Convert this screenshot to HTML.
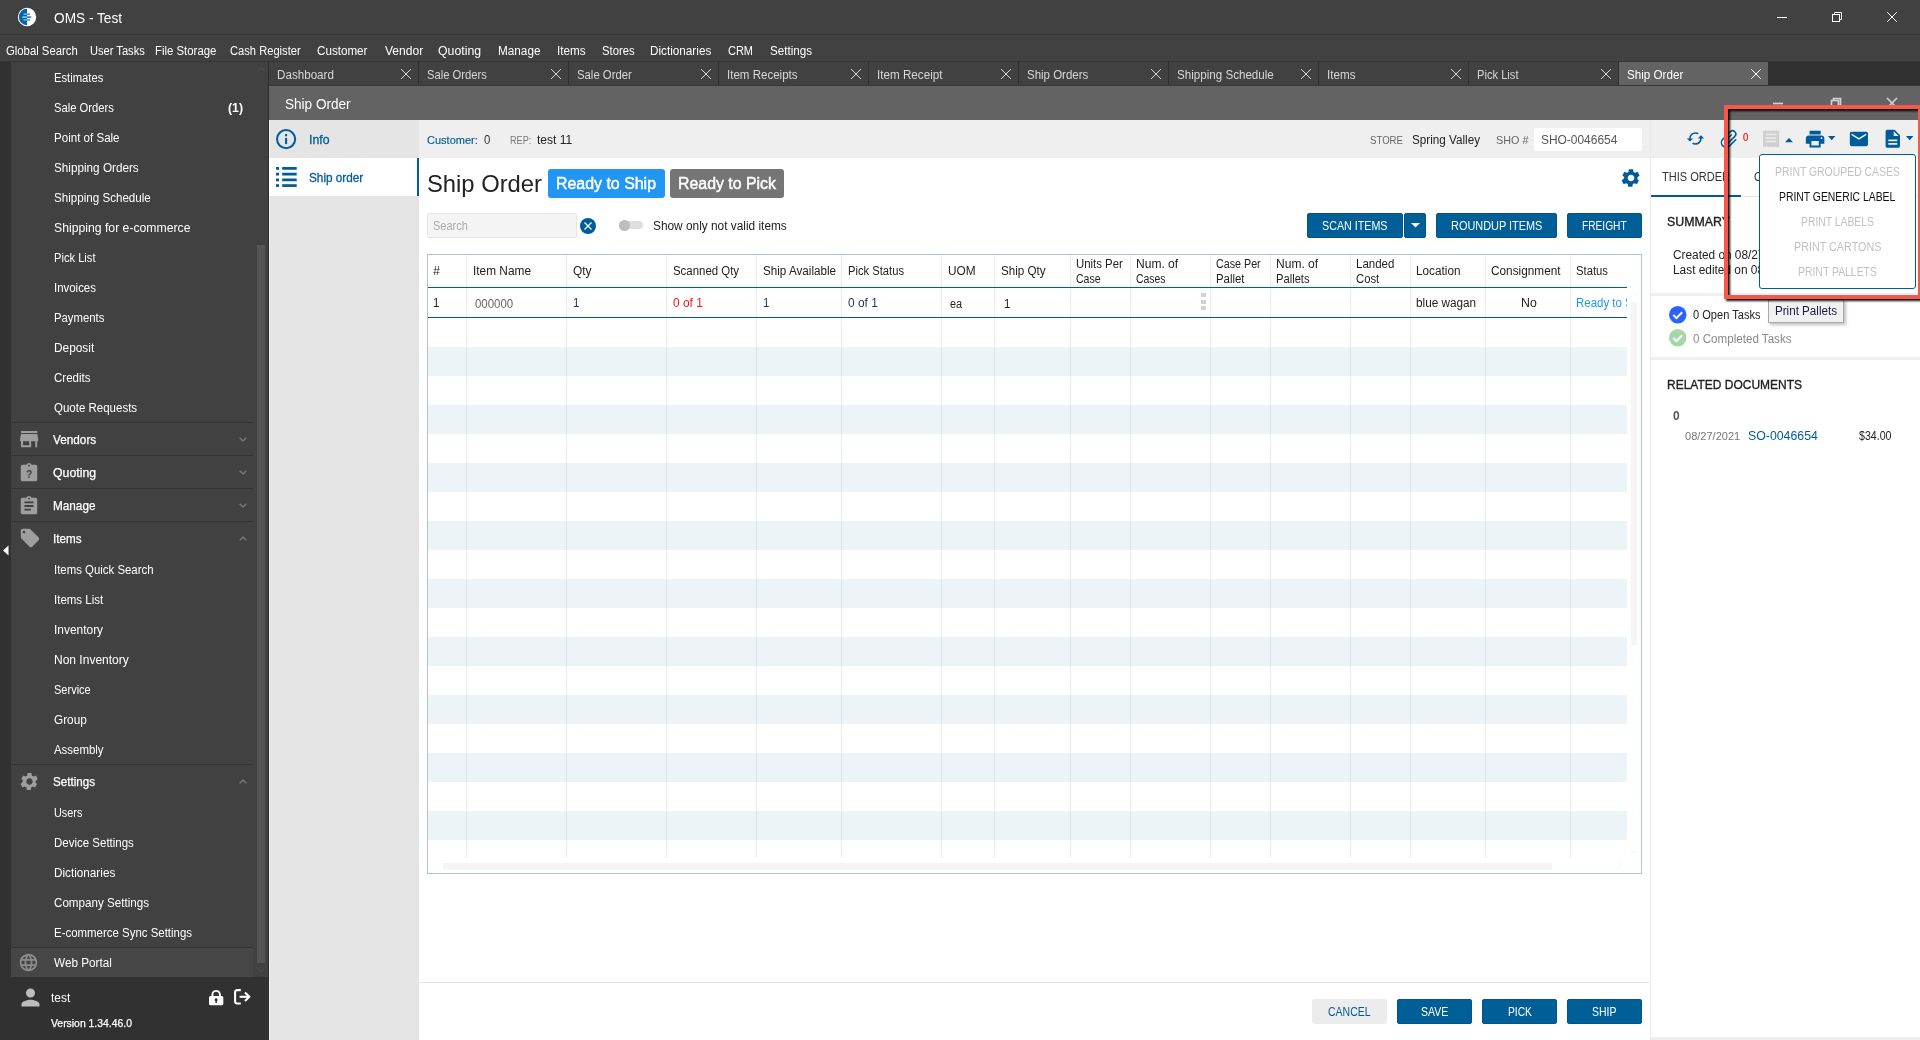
<!DOCTYPE html>
<html><head><meta charset="utf-8"><title>OMS - Test</title>
<style>
*{box-sizing:border-box;margin:0;padding:0}
html,body{width:1920px;height:1040px;overflow:hidden;background:#414141;font-family:"Liberation Sans",sans-serif;font-size:12px;color:#fff}
.a{position:absolute;white-space:nowrap}
.t{position:absolute;white-space:nowrap;transform-origin:0 0}
svg{position:absolute;overflow:visible}
</style></head><body>

<div class="a" style="left:0px;top:0px;width:1920px;height:34px;background:#414141;"></div>
<div class="a" style="left:0px;top:34px;width:1920px;height:1px;background:#363636;"></div>
<div class="a" style="left:0px;top:61px;width:1920px;height:1px;background:#363636;"></div>
<svg style="left:17px;top:7px" width="20" height="20" viewBox="0 0 20 20">
<circle cx="10" cy="10" r="9.200" fill="#fff"/>
<path d="M10 1.800 A8.200 8.200 0 0 0 10 18.200 Z" fill="#0067a8"/>
<g fill="#a8d0ea"><rect x="6.500" y="6.600" width="3.500" height="1.100"/><rect x="5.300" y="9.400" width="4.700" height="1.400"/><rect x="6.500" y="12.400" width="3.500" height="1.100"/></g><g fill="#0067a8"><rect x="10" y="6.600" width="3" height="1.100"/><rect x="10" y="9.400" width="4.200" height="1.400"/><rect x="10" y="12.400" width="3" height="1.100"/></g>
</svg>
<div class="t" style="left:54.00px;top:8.0px;font-size:14px;line-height:20px;color:#fff;transform:scaleX(0.9763);">OMS - Test</div>
<svg style="left:0;top:0" width="1920" height="130"><g stroke="#fff" stroke-width="1" fill="none"><path d="M1777 17.5h10"/><rect x="1832.5" y="14.5" width="7" height="7"/><path d="M1834.5 14.5v-2h7v7h-2"/><path d="M1887 12l10 10M1897 12l-10 10"/></g></svg>
<div class="t" style="left:6.00px;top:43.0px;font-size:12px;line-height:16px;color:#fff;transform:scaleX(0.9428);">Global Search</div>
<div class="t" style="left:90.00px;top:43.0px;font-size:12px;line-height:16px;color:#fff;transform:scaleX(0.9261);">User Tasks</div>
<div class="t" style="left:155.00px;top:43.0px;font-size:12px;line-height:16px;color:#fff;transform:scaleX(0.9486);">File Storage</div>
<div class="t" style="left:230.00px;top:43.0px;font-size:12px;line-height:16px;color:#fff;transform:scaleX(0.9294);">Cash Register</div>
<div class="t" style="left:317.00px;top:43.0px;font-size:12px;line-height:16px;color:#fff;transform:scaleX(0.9700);">Customer</div>
<div class="t" style="left:385.00px;top:43.0px;font-size:12px;line-height:16px;color:#fff;transform:scaleX(1.0042);">Vendor</div>
<div class="t" style="left:438.00px;top:43.0px;font-size:12px;line-height:16px;color:#fff;transform:scaleX(1.0242);">Quoting</div>
<div class="t" style="left:498.00px;top:43.0px;font-size:12px;line-height:16px;color:#fff;transform:scaleX(0.9789);">Manage</div>
<div class="t" style="left:557.00px;top:43.0px;font-size:12px;line-height:16px;color:#fff;transform:scaleX(0.9730);">Items</div>
<div class="t" style="left:602.00px;top:43.0px;font-size:12px;line-height:16px;color:#fff;transform:scaleX(0.9374);">Stores</div>
<div class="t" style="left:650.00px;top:43.0px;font-size:12px;line-height:16px;color:#fff;transform:scaleX(0.9774);">Dictionaries</div>
<div class="t" style="left:728.00px;top:43.0px;font-size:12px;line-height:16px;color:#fff;transform:scaleX(0.9147);">CRM</div>
<div class="t" style="left:770.00px;top:43.0px;font-size:12px;line-height:16px;color:#fff;transform:scaleX(0.9685);">Settings</div>
<div class="a" style="left:0px;top:62px;width:11px;height:978px;background:#313131;"></div>
<div class="a" style="left:11px;top:62px;width:258px;height:916px;background:#414141;"></div>
<div class="a" style="left:0px;top:977px;width:269px;height:63px;background:#313131;"></div>
<div class="a" style="left:11px;top:948px;width:242px;height:29px;background:#464646;"></div>
<div class="a" style="left:268px;top:62px;width:1px;height:915px;background:#2c2c2c;"></div>
<div class="a" style="left:257px;top:245px;width:8px;height:718px;background:#555;"></div>
<svg style="left:0;top:0" width="270" height="1040"><g stroke="#505050" stroke-width="1" fill="none"><path d="M257 71.500l4-4l4 4"/><path d="M257 967.500l4 4l4-4"/></g><path d="M8.500 545.500l-5.500 5l5.500 5z" fill="#fff"/></svg>
<div class="t" style="left:54.00px;top:70.0px;font-size:12px;line-height:16px;color:#fff;transform:scaleX(0.9354);">Estimates</div>
<div class="t" style="left:54.00px;top:100.0px;font-size:12px;line-height:16px;color:#fff;transform:scaleX(0.9346);">Sale Orders</div>
<div class="t" style="left:54.00px;top:130.0px;font-size:12px;line-height:16px;color:#fff;transform:scaleX(0.9634);">Point of Sale</div>
<div class="t" style="left:54.00px;top:160.0px;font-size:12px;line-height:16px;color:#fff;transform:scaleX(0.9772);">Shipping Orders</div>
<div class="t" style="left:54.00px;top:190.0px;font-size:12px;line-height:16px;color:#fff;transform:scaleX(0.9671);">Shipping Schedule</div>
<div class="t" style="left:54.00px;top:220.0px;font-size:12px;line-height:16px;color:#fff;transform:scaleX(1.0182);">Shipping for e-commerce</div>
<div class="t" style="left:54.00px;top:250.0px;font-size:12px;line-height:16px;color:#fff;transform:scaleX(0.9287);">Pick List</div>
<div class="t" style="left:54.00px;top:280.0px;font-size:12px;line-height:16px;color:#fff;transform:scaleX(0.9529);">Invoices</div>
<div class="t" style="left:54.00px;top:310.0px;font-size:12px;line-height:16px;color:#fff;transform:scaleX(0.9445);">Payments</div>
<div class="t" style="left:54.00px;top:340.0px;font-size:12px;line-height:16px;color:#fff;transform:scaleX(0.9890);">Deposit</div>
<div class="t" style="left:54.00px;top:370.0px;font-size:12px;line-height:16px;color:#fff;transform:scaleX(0.9586);">Credits</div>
<div class="t" style="left:54.00px;top:400.0px;font-size:12px;line-height:16px;color:#fff;transform:scaleX(0.9582);">Quote Requests</div>
<div class="t" style="left:54.00px;top:562.0px;font-size:12px;line-height:16px;color:#fff;transform:scaleX(0.9509);">Items Quick Search</div>
<div class="t" style="left:54.00px;top:592.0px;font-size:12px;line-height:16px;color:#fff;transform:scaleX(0.9587);">Items List</div>
<div class="t" style="left:54.00px;top:622.0px;font-size:12px;line-height:16px;color:#fff;transform:scaleX(0.9945);">Inventory</div>
<div class="t" style="left:54.00px;top:652.0px;font-size:12px;line-height:16px;color:#fff;transform:scaleX(1.0010);">Non Inventory</div>
<div class="t" style="left:54.00px;top:682.0px;font-size:12px;line-height:16px;color:#fff;transform:scaleX(0.9180);">Service</div>
<div class="t" style="left:54.00px;top:712.0px;font-size:12px;line-height:16px;color:#fff;transform:scaleX(0.9829);">Group</div>
<div class="t" style="left:54.00px;top:742.0px;font-size:12px;line-height:16px;color:#fff;transform:scaleX(0.9519);">Assembly</div>
<div class="t" style="left:54.00px;top:805.0px;font-size:12px;line-height:16px;color:#fff;transform:scaleX(0.9072);">Users</div>
<div class="t" style="left:54.00px;top:835.0px;font-size:12px;line-height:16px;color:#fff;transform:scaleX(0.9580);">Device Settings</div>
<div class="t" style="left:54.00px;top:865.0px;font-size:12px;line-height:16px;color:#fff;transform:scaleX(0.9774);">Dictionaries</div>
<div class="t" style="left:54.00px;top:895.0px;font-size:12px;line-height:16px;color:#fff;transform:scaleX(0.9688);">Company Settings</div>
<div class="t" style="left:54.00px;top:925.0px;font-size:12px;line-height:16px;color:#fff;transform:scaleX(0.9535);">E-commerce Sync Settings</div>
<div class="t" style="left:227.50px;top:100.0px;font-size:12px;line-height:16px;color:#fff;font-weight:bold;transform:scaleX(1.0224);">(1)</div>
<div class="a" style="left:12px;top:422px;width:241px;height:1px;background:#343434;border-radius:1px"></div>
<div class="a" style="left:12px;top:455px;width:241px;height:1px;background:#343434;border-radius:1px"></div>
<div class="a" style="left:12px;top:488px;width:241px;height:1px;background:#343434;border-radius:1px"></div>
<div class="a" style="left:12px;top:521px;width:241px;height:1px;background:#343434;border-radius:1px"></div>
<div class="a" style="left:12px;top:764px;width:241px;height:1px;background:#343434;border-radius:1px"></div>
<div class="a" style="left:12px;top:947px;width:241px;height:1px;background:#343434;border-radius:1px"></div>
<div class="t" style="left:53.00px;top:432.0px;font-size:12px;line-height:16px;color:#fff;transform:scaleX(0.9813);-webkit-text-stroke:0.25px #fff;">Vendors</div>
<svg style="left:239px;top:436.5px" width="8" height="5"><path d="M0.700 0.700l3.300 3.300l3.300-3.300" stroke="#787878" stroke-width="1.400" fill="none"/></svg>
<div class="t" style="left:53.00px;top:465.0px;font-size:12px;line-height:16px;color:#fff;transform:scaleX(1.0242);-webkit-text-stroke:0.25px #fff;">Quoting</div>
<svg style="left:239px;top:469.5px" width="8" height="5"><path d="M0.700 0.700l3.300 3.300l3.300-3.300" stroke="#787878" stroke-width="1.400" fill="none"/></svg>
<div class="t" style="left:53.00px;top:498.0px;font-size:12px;line-height:16px;color:#fff;transform:scaleX(0.9789);-webkit-text-stroke:0.25px #fff;">Manage</div>
<svg style="left:239px;top:502.5px" width="8" height="5"><path d="M0.700 0.700l3.300 3.300l3.300-3.300" stroke="#787878" stroke-width="1.400" fill="none"/></svg>
<div class="t" style="left:53.00px;top:531.0px;font-size:12px;line-height:16px;color:#fff;transform:scaleX(0.9730);-webkit-text-stroke:0.25px #fff;">Items</div>
<svg style="left:239px;top:535.5px" width="8" height="5"><path d="M0.700 4.300l3.300-3.300l3.300 3.300" stroke="#787878" stroke-width="1.400" fill="none"/></svg>
<div class="t" style="left:53.00px;top:774.0px;font-size:12px;line-height:16px;color:#fff;transform:scaleX(0.9685);-webkit-text-stroke:0.25px #fff;">Settings</div>
<svg style="left:239px;top:778.5px" width="8" height="5"><path d="M0.700 4.300l3.300-3.300l3.300 3.300" stroke="#787878" stroke-width="1.400" fill="none"/></svg>
<div class="t" style="left:54.00px;top:955.0px;font-size:12px;line-height:16px;color:#fff;transform:scaleX(0.9799);">Web Portal</div>
<svg style="left:17.300px;top:426.900px" width="24.300" height="24.300" viewBox="0 0 24 24"><path fill="#9e9e9e" d="M12,18H6V14H12M21,14V12L20,7H4L3,12V14H4V20H14V14H18V20H20V14M20,4H4V6H20V4Z"/></svg>
<svg style="left:18.300px;top:462px" width="22" height="22" viewBox="0 0 24 24"><path fill="#9e9e9e" d="M19 3h-4.180C14.400 1.840 13.300 1 12 1s-2.400.84-2.820 2H5c-1.100 0-2 .9-2 2v14c0 1.100.9 2 2 2h14c1.100 0 2-.9 2-2V5c0-1.100-.9-2-2-2zm-7 0c.55 0 1 .45 1 1s-.45 1-1 1-1-.45-1-1 .45-1 1-1z"/><text x="12" y="17.500" font-size="11" font-weight="bold" text-anchor="middle" fill="#414141" font-family="Liberation Sans, sans-serif">?</text></svg>
<svg style="left:18.300px;top:495px" width="22" height="22" viewBox="0 0 24 24"><path fill="#9e9e9e" d="M19 3h-4.180C14.400 1.840 13.300 1 12 1s-2.400.84-2.820 2H5c-1.100 0-2 .9-2 2v14c0 1.100.9 2 2 2h14c1.100 0 2-.9 2-2V5c0-1.100-.9-2-2-2zm-7 0c.55 0 1 .45 1 1s-.45 1-1 1-1-.45-1-1 .45-1 1-1zm2 14H7v-2h7v2zm3-4H7v-2h10v2zm0-4H7V7h10v2z"/></svg>
<svg style="left:18.600px;top:526.800px" width="22" height="22" viewBox="0 0 24 24"><path fill="#9e9e9e" d="M21.410 11.580l-9-9C12.050 2.220 11.550 2 11 2H4c-1.100 0-2 .9-2 2v7c0 .55.22 1.050.59 1.420l9 9c.36.36.86.58 1.410.58s1.050-.22 1.410-.59l7-7c.37-.36.59-.86.59-1.410s-.23-1.060-.59-1.420zM5.500 7C4.670 7 4 6.330 4 5.500S4.670 4 5.500 4 7 4.670 7 5.500 6.330 7 5.500 7z"/></svg>
<svg style="left:18.500px;top:770.500px" width="21" height="21" viewBox="0 0 24 24"><path fill="#9e9e9e" d="M19.140 12.940c.04-.3.06-.61.06-.94 0-.32-.02-.64-.07-.94l2.030-1.580c.18-.14.23-.41.12-.61l-1.920-3.320c-.12-.22-.37-.29-.59-.22l-2.390.96c-.5-.38-1.030-.7-1.620-.94l-.36-2.540c-.04-.24-.24-.41-.48-.41h-3.840c-.24 0-.43.17-.47.41l-.36 2.540c-.59.24-1.130.57-1.620.94l-2.390-.96c-.22-.08-.47 0-.59.22L2.740 8.870c-.12.21-.08.47.12.61l2.030 1.580c-.05.3-.9.63-.9.94s.2.640.07.940l-2.030 1.580c-.18.14-.23.41-.12.61l1.920 3.320c.12.22.37.29.59.22l2.390-.96c.5.38 1.030.7 1.620.94l.36 2.540c.05.24.24.41.48.41h3.840c.24 0 .44-.17.47-.41l.36-2.540c.59-.24 1.130-.56 1.620-.94l2.390.96c.22.08.47 0 .59-.22l1.920-3.320c.12-.22.07-.47-.12-.61l-2.010-1.580zM12 15.600c-1.980 0-3.600-1.620-3.600-3.600s1.620-3.600 3.600-3.600 3.600 1.620 3.600 3.600-1.620 3.600-3.600 3.600z"/></svg>
<svg style="left:18px;top:952px" width="21" height="21" viewBox="0 0 24 24"><path fill="#8c8c8c" d="M11.990 2C6.470 2 2 6.480 2 12s4.470 10 9.990 10C17.520 22 22 17.520 22 12S17.520 2 11.990 2zm6.930 6h-2.950c-.32-1.250-.78-2.450-1.380-3.560 1.840.63 3.370 1.910 4.330 3.560zM12 4.040c.83 1.200 1.480 2.530 1.910 3.960h-3.820c.43-1.430 1.080-2.760 1.910-3.960zM4.260 14C4.100 13.360 4 12.690 4 12s.1-1.360.26-2h3.380c-.08.66-.14 1.320-.14 2 0 .68.060 1.340.14 2H4.260zm.82 2h2.950c.32 1.250.78 2.450 1.380 3.560-1.840-.63-3.370-1.900-4.330-3.560zm2.950-8H5.080c.96-1.660 2.490-2.930 4.330-3.560C8.810 5.550 8.350 6.750 8.030 8zM12 19.960c-.83-1.200-1.480-2.530-1.910-3.960h3.820c-.43 1.430-1.080 2.760-1.910 3.960zM14.340 14H9.660c-.09-.66-.16-1.320-.16-2 0-.68.070-1.350.16-2h4.680c.09.650.16 1.320.16 2 0 .68-.07 1.340-.16 2zm.25 5.560c.6-1.110 1.060-2.310 1.380-3.560h2.950c-.96 1.650-2.490 2.930-4.330 3.560zM16.360 14c.08-.66.140-1.320.140-2 0-.68-.06-1.340-.14-2h3.380c.16.640.26 1.310.26 2s-.1 1.360-.26 2h-3.380z"/></svg>
<svg style="left:16.600px;top:983.900px" width="27" height="27" viewBox="0 0 24 24"><path fill="#bdbdbd" d="M12 12c2.210 0 4-1.790 4-4s-1.790-4-4-4-4 1.790-4 4 1.790 4 4 4zm0 2c-2.670 0-8 1.340-8 4v2h16v-2c0-2.660-5.330-4-8-4z"/></svg>
<div class="t" style="left:51.00px;top:990.0px;font-size:12px;line-height:16px;color:#fff;transform:scaleX(0.9933);">test</div>
<div class="t" style="left:51.00px;top:1015.0px;font-size:11px;line-height:16px;color:#fff;transform:scaleX(0.9452);-webkit-text-stroke:0.25px #fff;">Version 1.34.46.0</div>
<svg style="left:208.800px;top:989.600px" width="14.300" height="15.300" viewBox="0 0 14.300 15.300"><path d="M3.400 6.500V4.600a3.750 3.750 0 0 1 7.500 0V6.500" stroke="#fff" stroke-width="1.900" fill="none"/><path fill="#fff" fill-rule="evenodd" d="M1.600 6h11.100a1.600 1.600 0 0 1 1.600 1.600v6.100a1.600 1.600 0 0 1-1.600 1.600H1.600A1.600 1.600 0 0 1 0 13.700V7.600A1.600 1.600 0 0 1 1.600 6zM7.150 8.300a1.500 1.500 0 0 0-.75 2.800v1.900h1.500v-1.900a1.500 1.500 0 0 0-.75-2.800z"/></svg>
<svg style="left:234px;top:989.300px" width="16.200" height="15.600" viewBox="0 0 16.200 15.600"><g stroke="#fff" stroke-width="2.100" fill="none"><path d="M6.800 1.100H3.100a2 2 0 0 0-2 2v9.400a2 2 0 0 0 2 2H6.800"/><path d="M5.600 7.800h9.200"/><path d="M11 3.500l4.300 4.300l-4.300 4.300"/></g></svg>
<div class="a" style="left:269px;top:62px;width:1651px;height:24px;background:#313131;"></div>
<div class="a" style="left:269px;top:85px;width:1651px;height:1px;background:#383838;"></div>
<div class="a" style="left:269px;top:62px;width:149px;height:23px;background:#414141;"></div>
<div class="t" style="left:277.00px;top:67.0px;font-size:12px;line-height:16px;color:#d8d8d8;transform:scaleX(0.9700);">Dashboard</div>
<svg style="left:401px;top:69px" width="10" height="10"><path d="M0 0l10 10M10 0l-10 10" stroke="#d8d8d8" stroke-width="1" fill="none"/></svg>
<div class="a" style="left:419px;top:62px;width:149px;height:23px;background:#414141;"></div>
<div class="t" style="left:427.00px;top:67.0px;font-size:12px;line-height:16px;color:#d8d8d8;transform:scaleX(0.9346);">Sale Orders</div>
<svg style="left:551px;top:69px" width="10" height="10"><path d="M0 0l10 10M10 0l-10 10" stroke="#d8d8d8" stroke-width="1" fill="none"/></svg>
<div class="a" style="left:569px;top:62px;width:149px;height:23px;background:#414141;"></div>
<div class="t" style="left:577.00px;top:67.0px;font-size:12px;line-height:16px;color:#d8d8d8;transform:scaleX(0.9448);">Sale Order</div>
<svg style="left:701px;top:69px" width="10" height="10"><path d="M0 0l10 10M10 0l-10 10" stroke="#d8d8d8" stroke-width="1" fill="none"/></svg>
<div class="a" style="left:719px;top:62px;width:149px;height:23px;background:#414141;"></div>
<div class="t" style="left:727.00px;top:67.0px;font-size:12px;line-height:16px;color:#d8d8d8;transform:scaleX(0.9612);">Item Receipts</div>
<svg style="left:851px;top:69px" width="10" height="10"><path d="M0 0l10 10M10 0l-10 10" stroke="#d8d8d8" stroke-width="1" fill="none"/></svg>
<div class="a" style="left:869px;top:62px;width:149px;height:23px;background:#414141;"></div>
<div class="t" style="left:877.00px;top:67.0px;font-size:12px;line-height:16px;color:#d8d8d8;transform:scaleX(0.9724);">Item Receipt</div>
<svg style="left:1001px;top:69px" width="10" height="10"><path d="M0 0l10 10M10 0l-10 10" stroke="#d8d8d8" stroke-width="1" fill="none"/></svg>
<div class="a" style="left:1019px;top:62px;width:149px;height:23px;background:#414141;"></div>
<div class="t" style="left:1027.00px;top:67.0px;font-size:12px;line-height:16px;color:#d8d8d8;transform:scaleX(0.9571);">Ship Orders</div>
<svg style="left:1151px;top:69px" width="10" height="10"><path d="M0 0l10 10M10 0l-10 10" stroke="#d8d8d8" stroke-width="1" fill="none"/></svg>
<div class="a" style="left:1169px;top:62px;width:149px;height:23px;background:#414141;"></div>
<div class="t" style="left:1177.00px;top:67.0px;font-size:12px;line-height:16px;color:#d8d8d8;transform:scaleX(0.9671);">Shipping Schedule</div>
<svg style="left:1301px;top:69px" width="10" height="10"><path d="M0 0l10 10M10 0l-10 10" stroke="#d8d8d8" stroke-width="1" fill="none"/></svg>
<div class="a" style="left:1319px;top:62px;width:149px;height:23px;background:#414141;"></div>
<div class="t" style="left:1327.00px;top:67.0px;font-size:12px;line-height:16px;color:#d8d8d8;transform:scaleX(0.9730);">Items</div>
<svg style="left:1451px;top:69px" width="10" height="10"><path d="M0 0l10 10M10 0l-10 10" stroke="#d8d8d8" stroke-width="1" fill="none"/></svg>
<div class="a" style="left:1469px;top:62px;width:149px;height:23px;background:#414141;"></div>
<div class="t" style="left:1477.00px;top:67.0px;font-size:12px;line-height:16px;color:#d8d8d8;transform:scaleX(0.9287);">Pick List</div>
<svg style="left:1601px;top:69px" width="10" height="10"><path d="M0 0l10 10M10 0l-10 10" stroke="#d8d8d8" stroke-width="1" fill="none"/></svg>
<div class="a" style="left:1619px;top:62px;width:149px;height:23px;background:#636363;"></div>
<div class="t" style="left:1627.00px;top:67.0px;font-size:12px;line-height:16px;color:#fff;transform:scaleX(0.9697);">Ship Order</div>
<svg style="left:1751px;top:69px" width="10" height="10"><path d="M0 0l10 10M10 0l-10 10" stroke="#fff" stroke-width="1" fill="none"/></svg>
<div class="a" style="left:269px;top:86px;width:1651px;height:34px;background:#636363;"></div>
<div class="t" style="left:285.00px;top:94.5px;font-size:14px;line-height:18px;color:#fff;transform:scaleX(0.9697);">Ship Order</div>
<svg style="left:0;top:0" width="1920" height="130"><g stroke="#d2d2d2" stroke-width="1.7" fill="none"><path d="M1773 103.5h10"/><rect x="1831.5" y="100.5" width="7" height="7"/><path d="M1833.5 100.5v-2h7v7h-2"/><path d="M1887 98l10 10M1897 98l-10 10"/></g></svg>
<div class="a" style="left:269px;top:120px;width:150px;height:920px;background:#e5e5e5;"></div>
<div class="a" style="left:269px;top:120px;width:1px;height:920px;background:#f0f0f0;"></div>
<div class="a" style="left:269px;top:158px;width:150px;height:38px;background:#fff;border-right:2px solid #005a9e"></div>
<svg style="left:276px;top:129.300px" width="20.200" height="20.200" viewBox="0 0 20 20"><circle cx="10" cy="10" r="9" fill="none" stroke="#005b9a" stroke-width="2"/><rect x="9" y="8.800" width="2" height="6.200" fill="#005b9a"/><rect x="9" y="5" width="2" height="2.200" fill="#005b9a"/></svg>
<div class="t" style="left:309.00px;top:131.5px;font-size:12px;line-height:16px;color:#005b9a;transform:scaleX(1.0228);-webkit-text-stroke:0.3px #005b9a;">Info</div>
<svg style="left:276px;top:167.100px" width="21" height="20" viewBox="0 0 21 20"><g fill="#005b9a"><rect x="0" y="0" width="3" height="2.750"/><rect x="6.200" y="0" width="14.500" height="2.750"/><rect x="0" y="5.75" width="3" height="2.750"/><rect x="6.200" y="5.75" width="14.500" height="2.750"/><rect x="0" y="11.5" width="3" height="2.750"/><rect x="6.200" y="11.5" width="14.500" height="2.750"/><rect x="0" y="17.2" width="3" height="2.750"/><rect x="6.200" y="17.2" width="14.500" height="2.750"/></g></svg>
<div class="t" style="left:309.00px;top:169.5px;font-size:12px;line-height:16px;color:#005b9a;transform:scaleX(0.9804);-webkit-text-stroke:0.3px #005b9a;">Ship order</div>
<div class="a" style="left:419px;top:120px;width:1501px;height:38px;background:#efefef;"></div>
<div class="a" style="left:419px;top:158px;width:1501px;height:882px;background:#fff;"></div>
<div class="a" style="left:1650px;top:120px;width:1px;height:920px;background:#eaeaea;"></div>
<div class="a" style="left:419px;top:982px;width:1231px;height:1px;background:#e4e4e4;"></div>
<div class="a" style="left:1651px;top:1037px;width:269px;height:3px;background:#efefef;"></div>
<div class="t" style="left:427.00px;top:131.5px;font-size:11.5px;line-height:16px;color:#005b9a;transform:scaleX(0.9578);-webkit-text-stroke:0.15px #005b9a;">Customer:</div>
<div class="t" style="left:484.00px;top:131.5px;font-size:12px;line-height:16px;color:#333;transform:scaleX(0.9528);">0</div>
<div class="t" style="left:510.00px;top:131.5px;font-size:11.5px;line-height:16px;color:#777;transform:scaleX(0.7939);">REP:</div>
<div class="t" style="left:537.00px;top:131.5px;font-size:12px;line-height:16px;color:#222;transform:scaleX(1.0015);">test 11</div>
<div class="t" style="left:1370.00px;top:131.5px;font-size:11.5px;line-height:16px;color:#666;transform:scaleX(0.8370);">STORE</div>
<div class="t" style="left:1412.00px;top:131.5px;font-size:12px;line-height:16px;color:#222;transform:scaleX(0.9738);">Spring Valley</div>
<div class="t" style="left:1496.00px;top:131.5px;font-size:11.5px;line-height:16px;color:#666;transform:scaleX(0.9384);">SHO #</div>
<div class="a" style="left:1534px;top:128px;width:108px;height:23px;background:#fff;border-radius:2px"></div>
<div class="t" style="left:1541.00px;top:131.5px;font-size:12px;line-height:16px;color:#555;transform:scaleX(0.9945);">SHO-0046654</div>
<div class="t" style="left:427.00px;top:168.5px;font-size:24px;line-height:30px;color:#222;transform:scaleX(0.9908);">Ship Order</div>
<div class="a" style="left:548px;top:169px;width:117px;height:29px;background:#2196f3;border-radius:3px"></div>
<div class="t" style="left:556.00px;top:173.5px;font-size:16px;line-height:20px;color:#fff;transform:scaleX(0.9949);-webkit-text-stroke:0.45px #fff;">Ready to Ship</div>
<div class="a" style="left:670px;top:169px;width:114px;height:29px;background:#757575;border-radius:3px"></div>
<div class="t" style="left:678.00px;top:173.5px;font-size:16px;line-height:20px;color:#fff;transform:scaleX(0.9927);-webkit-text-stroke:0.45px #fff;">Ready to Pick</div>
<svg style="left:1619.500px;top:167px" width="22" height="22" viewBox="0 0 24 24"><path fill="#005b9a" d="M19.140 12.940c.04-.3.06-.61.06-.94 0-.32-.02-.64-.07-.94l2.030-1.580c.18-.14.23-.41.12-.61l-1.920-3.320c-.12-.22-.37-.29-.59-.22l-2.390.96c-.5-.38-1.030-.7-1.620-.94l-.36-2.540c-.04-.24-.24-.41-.48-.41h-3.840c-.24 0-.43.17-.47.41l-.36 2.540c-.59.24-1.130.57-1.620.94l-2.390-.96c-.22-.08-.47 0-.59.22L2.740 8.870c-.12.21-.08.47.12.61l2.030 1.580c-.05.3-.9.63-.9.94s.2.640.07.940l-2.030 1.580c-.18.14-.23.41-.12.61l1.920 3.320c.12.22.37.29.59.22l2.390-.96c.5.38 1.030.7 1.620.94l.36 2.540c.05.24.24.41.48.41h3.840c.24 0 .44-.17.47-.41l.36-2.540c.59-.24 1.130-.56 1.620-.94l2.390.96c.22.08.47 0 .59-.22l1.920-3.320c.12-.22.07-.47-.12-.61l-2.010-1.580zM12 15.600c-1.980 0-3.600-1.620-3.600-3.600s1.620-3.600 3.600-3.600 3.600 1.620 3.600 3.600-1.620 3.600-3.600 3.600z"/></svg>
<div class="a" style="left:427px;top:213px;width:150px;height:25px;background:#f4f4f4;border:1px solid #e6e6e6;border-radius:2px"></div>
<div class="t" style="left:433.00px;top:217.5px;font-size:12px;line-height:16px;color:#aaa;transform:scaleX(0.9133);">Search</div>
<svg style="left:580px;top:217.600px" width="16" height="16" viewBox="0 0 16 16"><circle cx="8" cy="8" r="8" fill="#005b9a"/><path d="M4.500 4.500l7 7M11.500 4.500l-7 7" stroke="#fff" stroke-width="1.300"/></svg>
<div class="a" style="left:619px;top:221px;width:24px;height:8px;background:#dedede;border-radius:4px"></div>
<div class="a" style="left:619px;top:219.5px;width:11px;height:11px;background:#bdbdbd;border-radius:6px"></div>
<div class="t" style="left:653.00px;top:217.5px;font-size:12px;line-height:16px;color:#222;transform:scaleX(0.9881);">Show only not valid items</div>
<div class="a" style="left:1307px;top:213px;width:96px;height:25px;background:#005f97;border-radius:2px;border:1px solid #00558d;"></div>
<div class="t" style="left:1322.26px;top:217.5px;font-size:12px;line-height:16px;color:#fff;transform:scaleX(0.8929);">SCAN ITEMS</div>
<div class="a" style="left:1404px;top:213px;width:22px;height:25px;background:#005f97;border-radius:2px;border:1px solid #00558d;"></div>
<svg style="left:1410.500px;top:223px" width="9" height="5"><path d="M0 0h9l-4.500 4.500z" fill="#fff"/></svg>
<div class="a" style="left:1436px;top:213px;width:121px;height:25px;background:#005f97;border-radius:2px;border:1px solid #00558d;"></div>
<div class="t" style="left:1450.80px;top:217.5px;font-size:12px;line-height:16px;color:#fff;transform:scaleX(0.9098);">ROUNDUP ITEMS</div>
<div class="a" style="left:1567px;top:213px;width:75px;height:25px;background:#005f97;border-radius:2px;border:1px solid #00558d;"></div>
<div class="t" style="left:1582.17px;top:217.5px;font-size:12px;line-height:16px;color:#fff;transform:scaleX(0.8479);">FREIGHT</div>
<div class="a" style="left:1312px;top:999px;width:75px;height:25px;background:#ececec;border-radius:2px;"></div>
<div class="t" style="left:1328.18px;top:1003.5px;font-size:12px;line-height:16px;color:#005b9a;transform:scaleX(0.8759);">CANCEL</div>
<div class="a" style="left:1397px;top:999px;width:75px;height:25px;background:#005f97;border-radius:2px;border:1px solid #00558d;"></div>
<div class="t" style="left:1420.89px;top:1003.5px;font-size:12px;line-height:16px;color:#fff;transform:scaleX(0.8745);">SAVE</div>
<div class="a" style="left:1482px;top:999px;width:75px;height:25px;background:#005f97;border-radius:2px;border:1px solid #00558d;"></div>
<div class="t" style="left:1507.53px;top:1003.5px;font-size:12px;line-height:16px;color:#fff;transform:scaleX(0.8545);">PICK</div>
<div class="a" style="left:1567px;top:999px;width:75px;height:25px;background:#005f97;border-radius:2px;border:1px solid #00558d;"></div>
<div class="t" style="left:1592.28px;top:1003.5px;font-size:12px;line-height:16px;color:#fff;transform:scaleX(0.8720);">SHIP</div>
<div class="a" style="left:427px;top:254px;width:1215px;height:620px;background:#fff;border:1px solid #b0c2d9"></div>
<div class="a" style="left:428px;top:347px;width:1198.5px;height:29px;background:#ecf4f7;"></div>
<div class="a" style="left:428px;top:405px;width:1198.5px;height:29px;background:#ecf4f7;"></div>
<div class="a" style="left:428px;top:463px;width:1198.5px;height:29px;background:#ecf4f7;"></div>
<div class="a" style="left:428px;top:521px;width:1198.5px;height:29px;background:#ecf4f7;"></div>
<div class="a" style="left:428px;top:579px;width:1198.5px;height:29px;background:#ecf4f7;"></div>
<div class="a" style="left:428px;top:637px;width:1198.5px;height:29px;background:#ecf4f7;"></div>
<div class="a" style="left:428px;top:695px;width:1198.5px;height:29px;background:#ecf4f7;"></div>
<div class="a" style="left:428px;top:753px;width:1198.5px;height:29px;background:#ecf4f7;"></div>
<div class="a" style="left:428px;top:811px;width:1198.5px;height:29px;background:#ecf4f7;"></div>
<div class="a" style="left:466.2px;top:255px;width:1.1px;height:603px;background:rgba(80,100,130,.12);"></div>
<div class="a" style="left:566.2px;top:255px;width:1.1px;height:603px;background:rgba(80,100,130,.12);"></div>
<div class="a" style="left:666.2px;top:255px;width:1.1px;height:603px;background:rgba(80,100,130,.12);"></div>
<div class="a" style="left:756.2px;top:255px;width:1.1px;height:603px;background:rgba(80,100,130,.12);"></div>
<div class="a" style="left:841.2px;top:255px;width:1.1px;height:603px;background:rgba(80,100,130,.12);"></div>
<div class="a" style="left:941.2px;top:255px;width:1.1px;height:603px;background:rgba(80,100,130,.12);"></div>
<div class="a" style="left:994.2px;top:255px;width:1.1px;height:603px;background:rgba(80,100,130,.12);"></div>
<div class="a" style="left:1070.2px;top:255px;width:1.1px;height:603px;background:rgba(80,100,130,.12);"></div>
<div class="a" style="left:1130.2px;top:255px;width:1.1px;height:603px;background:rgba(80,100,130,.12);"></div>
<div class="a" style="left:1210.2px;top:255px;width:1.1px;height:603px;background:rgba(80,100,130,.12);"></div>
<div class="a" style="left:1270.2px;top:255px;width:1.1px;height:603px;background:rgba(80,100,130,.12);"></div>
<div class="a" style="left:1350.2px;top:255px;width:1.1px;height:603px;background:rgba(80,100,130,.12);"></div>
<div class="a" style="left:1410.2px;top:255px;width:1.1px;height:603px;background:rgba(80,100,130,.12);"></div>
<div class="a" style="left:1485.2px;top:255px;width:1.1px;height:603px;background:rgba(80,100,130,.12);"></div>
<div class="a" style="left:1570.2px;top:255px;width:1.1px;height:603px;background:rgba(80,100,130,.12);"></div>
<div class="a" style="left:428px;top:285px;width:1199px;height:1px;background:rgba(0,0,0,.05);"></div>
<div class="a" style="left:428px;top:287px;width:1199px;height:1px;background:#005b9a;box-shadow:0 0 0.500px #005b9a"></div>
<div class="a" style="left:428px;top:317px;width:1199px;height:1px;background:#005b9a;box-shadow:0 0 0.500px #005b9a"></div>
<div class="t" style="left:433.00px;top:263.0px;font-size:12px;line-height:16px;color:#222;transform:scaleX(1.0443);">#</div>
<div class="t" style="left:473.00px;top:263.0px;font-size:12px;line-height:16px;color:#222;transform:scaleX(0.9885);">Item Name</div>
<div class="t" style="left:573.00px;top:263.0px;font-size:12px;line-height:16px;color:#222;transform:scaleX(0.9950);">Qty</div>
<div class="t" style="left:673.00px;top:263.0px;font-size:12px;line-height:16px;color:#222;transform:scaleX(0.9526);">Scanned Qty</div>
<div class="t" style="left:763.00px;top:263.0px;font-size:12px;line-height:16px;color:#222;transform:scaleX(0.9718);">Ship Available</div>
<div class="t" style="left:848.00px;top:263.0px;font-size:12px;line-height:16px;color:#222;transform:scaleX(0.9339);">Pick Status</div>
<div class="t" style="left:948.00px;top:263.0px;font-size:12px;line-height:16px;color:#222;transform:scaleX(0.9867);">UOM</div>
<div class="t" style="left:1001.00px;top:263.0px;font-size:12px;line-height:16px;color:#222;transform:scaleX(0.9688);">Ship Qty</div>
<div class="t" style="left:1416.00px;top:263.0px;font-size:12px;line-height:16px;color:#222;transform:scaleX(0.9799);">Location</div>
<div class="t" style="left:1491.00px;top:263.0px;font-size:12px;line-height:16px;color:#222;transform:scaleX(0.9835);">Consignment</div>
<div class="t" style="left:1576.00px;top:263.0px;font-size:12px;line-height:16px;color:#222;transform:scaleX(0.9406);">Status</div>
<div class="t" style="left:1076.00px;top:255.5px;font-size:12px;line-height:16px;color:#222;transform:scaleX(0.9490);">Units Per</div>
<div class="t" style="left:1076.00px;top:270.5px;font-size:12px;line-height:16px;color:#222;transform:scaleX(0.8757);">Case</div>
<div class="t" style="left:1136.00px;top:255.5px;font-size:12px;line-height:16px;color:#222;transform:scaleX(1.0036);">Num. of</div>
<div class="t" style="left:1136.00px;top:270.5px;font-size:12px;line-height:16px;color:#222;transform:scaleX(0.8687);">Cases</div>
<div class="t" style="left:1216.00px;top:255.5px;font-size:12px;line-height:16px;color:#222;transform:scaleX(0.8931);">Case Per</div>
<div class="t" style="left:1216.00px;top:270.5px;font-size:12px;line-height:16px;color:#222;transform:scaleX(0.9507);">Pallet</div>
<div class="t" style="left:1276.00px;top:255.5px;font-size:12px;line-height:16px;color:#222;transform:scaleX(1.0036);">Num. of</div>
<div class="t" style="left:1276.00px;top:270.5px;font-size:12px;line-height:16px;color:#222;transform:scaleX(0.9316);">Pallets</div>
<div class="t" style="left:1356.00px;top:255.5px;font-size:12px;line-height:16px;color:#222;transform:scaleX(0.9578);">Landed</div>
<div class="t" style="left:1356.00px;top:270.5px;font-size:12px;line-height:16px;color:#222;transform:scaleX(0.9426);">Cost</div>
<div class="t" style="left:433.00px;top:294.5px;font-size:12px;line-height:16px;color:#222;transform:scaleX(0.9528);">1</div>
<div class="t" style="left:475.00px;top:295.5px;font-size:12px;line-height:16px;color:#666;transform:scaleX(0.9546);">000000</div>
<div class="t" style="left:573.00px;top:294.5px;font-size:12px;line-height:16px;color:#1c3558;transform:scaleX(0.9528);">1</div>
<div class="t" style="left:673.00px;top:294.5px;font-size:12px;line-height:16px;color:#f01818;transform:scaleX(0.9940);">0 of 1</div>
<div class="t" style="left:763.00px;top:294.5px;font-size:12px;line-height:16px;color:#1c3558;transform:scaleX(0.9528);">1</div>
<div class="t" style="left:848.00px;top:294.5px;font-size:12px;line-height:16px;color:#1c3558;transform:scaleX(0.9940);">0 of 1</div>
<div class="t" style="left:950.00px;top:295.5px;font-size:12px;line-height:16px;color:#222;transform:scaleX(0.9133);">ea</div>
<div class="t" style="left:1004.00px;top:295.5px;font-size:12px;line-height:16px;color:#222;transform:scaleX(0.9528);">1</div>
<div class="t" style="left:1416.00px;top:294.5px;font-size:12px;line-height:16px;color:#222;transform:scaleX(0.9798);">blue wagan</div>
<div class="t" style="left:1521.11px;top:294.5px;font-size:12px;line-height:16px;color:#222;transform:scaleX(1.0280);">No</div>
<div class="a" style="left:1570px;top:289px;width:56.500px;height:28px;overflow:hidden">
<div class="t" style="left:6.00px;top:5.5px;font-size:12px;line-height:16px;color:#2196f3;transform:scaleX(0.9561);">Ready to Ship</div>
</div>
<div class="a" style="left:1201px;top:293.0px;width:4.6px;height:4.4px;background:#d2d2d2;"></div>
<div class="a" style="left:1201px;top:299.5px;width:4.6px;height:4.4px;background:#d2d2d2;"></div>
<div class="a" style="left:1201px;top:306.0px;width:4.6px;height:4.4px;background:#d2d2d2;"></div>
<div class="a" style="left:1630.8px;top:301.5px;width:6.7px;height:343.5px;background:#f5f5f5;"></div>
<div class="a" style="left:443px;top:862.5px;width:1109px;height:7px;background:#f5f5f5;"></div>
<svg style="left:0;top:0" width="1920" height="1040"><g stroke="#f2f2f2" stroke-width="1" fill="none"><path d="M1630.5 296l3.7-3.7l3.7 3.7"/><path d="M1630.500 849.500l3.500 3.500l3.500-3.500"/><path d="M1617.500 861.500l3.500 3.500l-3.500 3.500"/></g></svg>
<svg style="left:1685.500px;top:129.300px" width="18.900" height="18.900" viewBox="0 0 24 24"><path fill="#005b9a" d="M19,8L15,12H18A6,6 0 0,1 12,18C11,18 10.030,17.750 9.200,17.300L7.740,18.760C8.970,19.540 10.430,20 12,20A8,8 0 0,0 20,12H23M6,12A6,6 0 0,1 12,6C13,6 13.970,6.250 14.800,6.700L16.260,5.240C15.030,4.460 13.570,4 12,4A8,8 0 0,0 4,12H1L5,16L9,12"/></svg>
<svg style="left:1717.200px;top:126.500px" width="24" height="24" viewBox="0 0 24 24"><path transform="rotate(-45 12 12)" fill="#005b9a" d="M7.500,18A5.500,5.500 0 0,1 2,12.500A5.500,5.500 0 0,1 7.500,7H18A4,4 0 0,1 22,11A4,4 0 0,1 18,15H9.500A2.500,2.500 0 0,1 7,12.500A2.500,2.500 0 0,1 9.500,10H17V11.500H9.500A1,1 0 0,0 8.500,12.500A1,1 0 0,0 9.500,13.500H18A2.500,2.500 0 0,0 20.500,11A2.500,2.500 0 0,0 18,8.500H7.500A4,4 0 0,0 3.500,12.500A4,4 0 0,0 7.500,16.500H17V18H7.500Z"/></svg>
<div class="t" style="left:1743.20px;top:130.0px;font-size:10px;line-height:16px;color:#ff0d0d;transform:scaleX(0.9546);-webkit-text-stroke:0.2px #ff0d0d;">0</div>
<svg style="left:1762.800px;top:130.200px" width="16.200" height="17.400" viewBox="0 0 16.200 17.400"><path fill="#d0d0d0" d="M0 0l1.35 1.2l1.35-1.2l1.35 1.2l1.35-1.2l1.35 1.2l1.35-1.2l1.35 1.2l1.35-1.2l1.35 1.2l1.35-1.2l1.35 1.2l1.35-1.2v17.400l-1.35-1.2l-1.35 1.2l-1.35-1.2l-1.35 1.2l-1.35-1.2l-1.35 1.2l-1.35-1.2l-1.35 1.2l-1.35-1.2l-1.35 1.2l-1.35-1.2l-1.35 1.2z"/><g fill="#ebebeb"><rect x="2.900" y="3.700" width="10.400" height="1.600"/><rect x="2.900" y="7.300" width="10.400" height="1.600"/><rect x="2.900" y="10.700" width="10.400" height="1.600"/></g></svg>
<svg style="left:1784.500px;top:137.600px" width="8" height="4.300"><path d="M0 4.300l4-4.300l4 4.300z" fill="#005b9a"/></svg>
<svg style="left:1804px;top:128.200px" width="22.200" height="22.200" viewBox="0 0 24 24"><path fill="#005b9a" d="M19 8H5c-1.660 0-3 1.340-3 3v6h4v4h12v-4h4v-6c0-1.660-1.340-3-3-3zm-3 11H8v-5h8v5zm3-7c-.55 0-1-.45-1-1s.45-1 1-1 1 .45 1 1-.45 1-1 1zm-1-9H6v4h12V3z"/></svg>
<svg style="left:1828px;top:136.300px" width="7.400" height="4.300"><path d="M0 0h7.400l-3.700 4.300z" fill="#005b9a"/></svg>
<svg style="left:1848.200px;top:128.400px" width="21.800" height="21.800" viewBox="0 0 24 24"><path fill="#005b9a" d="M20 4H4c-1.100 0-1.990.9-1.990 2L2 18c0 1.100.9 2 2 2h16c1.100 0 2-.9 2-2V6c0-1.100-.9-2-2-2zm0 4l-8 5-8-5V6l8 5 8-5v2z"/></svg>
<svg style="left:1882.300px;top:128.200px" width="21.600" height="21.600" viewBox="0 0 24 24"><path fill="#005b9a" d="M13,9H18.500L13,3.500V9M6,2H14L20,8V20A2,2 0 0,1 18,22H6C4.890,22 4,21.100 4,20V4C4,2.890 4.890,2 6,2M17,18.700V16.600H7V18.700H17M17,14.700V12.800H7V14.700H17Z"/></svg>
<svg style="left:1906.100px;top:136.300px" width="7.400" height="4.300"><path d="M0 0h7.400l-3.700 4.300z" fill="#005b9a"/></svg>
<div class="t" style="left:1662.00px;top:168.5px;font-size:12px;line-height:16px;color:#333;transform:scaleX(0.9187);">THIS ORDER</div>
<div class="t" style="left:1754.00px;top:168.5px;font-size:12px;line-height:16px;color:#333;transform:scaleX(0.9057);">CUSTOMER</div>
<div class="a" style="left:1651px;top:196px;width:269px;height:1px;background:#e6e6e6;"></div>
<div class="a" style="left:1651px;top:195px;width:90px;height:2px;background:#005b9a;"></div>
<div class="t" style="left:1667.00px;top:213.5px;font-size:13px;line-height:16px;color:#222;transform:scaleX(0.9514);-webkit-text-stroke:0.35px #222;">SUMMARY</div>
<div class="t" style="left:1673.00px;top:246.5px;font-size:12px;line-height:16px;color:#222;transform:scaleX(0.9860);">Created on 08/27/2021</div>
<div class="t" style="left:1673.00px;top:262.0px;font-size:12px;line-height:16px;color:#222;transform:scaleX(0.9890);">Last edited on 08/27/2021</div>
<div class="a" style="left:1651px;top:293px;width:269px;height:2.5px;background:#f0f0f0;box-shadow:0 0 1px #f0f0f0"></div>
<svg style="left:1668.8px;top:306px" width="17.5" height="17.5" viewBox="0 0 17 17"><circle cx="8.500" cy="8.500" r="8.500" fill="#2962ff"/><path d="M4.200 8.800l3 3l5.600-5.800" stroke="#fff" stroke-width="2" fill="none"/></svg>
<div class="t" style="left:1693.00px;top:306.5px;font-size:12px;line-height:16px;color:#222;transform:scaleX(0.9240);">0 Open Tasks</div>
<svg style="left:1668.8px;top:329px" width="17.5" height="17.5" viewBox="0 0 17 17"><circle cx="8.500" cy="8.500" r="8.500" fill="#a5d6a7"/><path d="M4.200 8.800l3 3l5.600-5.800" stroke="#fff" stroke-width="2" fill="none"/></svg>
<div class="t" style="left:1693.00px;top:331.0px;font-size:12px;line-height:16px;color:#8a8a8a;transform:scaleX(0.9676);">0 Completed Tasks</div>
<div class="a" style="left:1651px;top:357px;width:269px;height:2.5px;background:#f0f0f0;box-shadow:0 0 1px #f0f0f0"></div>
<div class="t" style="left:1667.00px;top:376.5px;font-size:13px;line-height:16px;color:#222;transform:scaleX(0.9222);-webkit-text-stroke:0.35px #222;">RELATED DOCUMENTS</div>
<div class="t" style="left:1673.00px;top:407.5px;font-size:12px;line-height:16px;color:#555;font-weight:bold;transform:scaleX(0.9957);">0</div>
<div class="t" style="left:1685.00px;top:427.5px;font-size:11px;line-height:16px;color:#777;transform:scaleX(1.0019);">08/27/2021</div>
<div class="t" style="left:1748.00px;top:427.5px;font-size:13px;line-height:16px;color:#005b9a;transform:scaleX(0.9478);">SO-0046654</div>
<div class="t" style="left:1859.30px;top:427.5px;font-size:12px;line-height:16px;color:#222;transform:scaleX(0.8855);">$34.00</div>
<div class="a" style="left:1759px;top:154px;width:157px;height:135px;background:#fff;border:1px solid #005b9a;border-radius:3px"></div>
<div class="t" style="left:1774.74px;top:163.5px;font-size:12px;line-height:16px;color:#c2c2c2;transform:scaleX(0.8686);">PRINT GROUPED CASES</div>
<div class="t" style="left:1779.05px;top:188.5px;font-size:12px;line-height:16px;color:#111;transform:scaleX(0.8648);">PRINT GENERIC LABEL</div>
<div class="t" style="left:1800.75px;top:213.5px;font-size:12px;line-height:16px;color:#c2c2c2;transform:scaleX(0.8628);">PRINT LABELS</div>
<div class="t" style="left:1793.52px;top:238.5px;font-size:12px;line-height:16px;color:#c2c2c2;transform:scaleX(0.8972);">PRINT CARTONS</div>
<div class="t" style="left:1797.73px;top:263.5px;font-size:12px;line-height:16px;color:#c2c2c2;transform:scaleX(0.8681);">PRINT PALLETS</div>
<div class="a" style="left:1768px;top:299px;width:76px;height:24px;background:#f1f1f1;border:1px solid #a8a8a8;box-shadow:2px 2px 3px rgba(0,0,0,.25)"></div>
<div class="t" style="left:1775.00px;top:302.5px;font-size:12px;line-height:16px;color:#1a1a4a;transform:scaleX(0.9683);">Print Pallets</div>
<div class="a" style="left:1724px;top:105px;width:198px;height:194px;border:4px solid #f8584a;filter:drop-shadow(2.500px 2.500px 1.200px rgba(0,0,0,.95))"></div>
</body></html>
